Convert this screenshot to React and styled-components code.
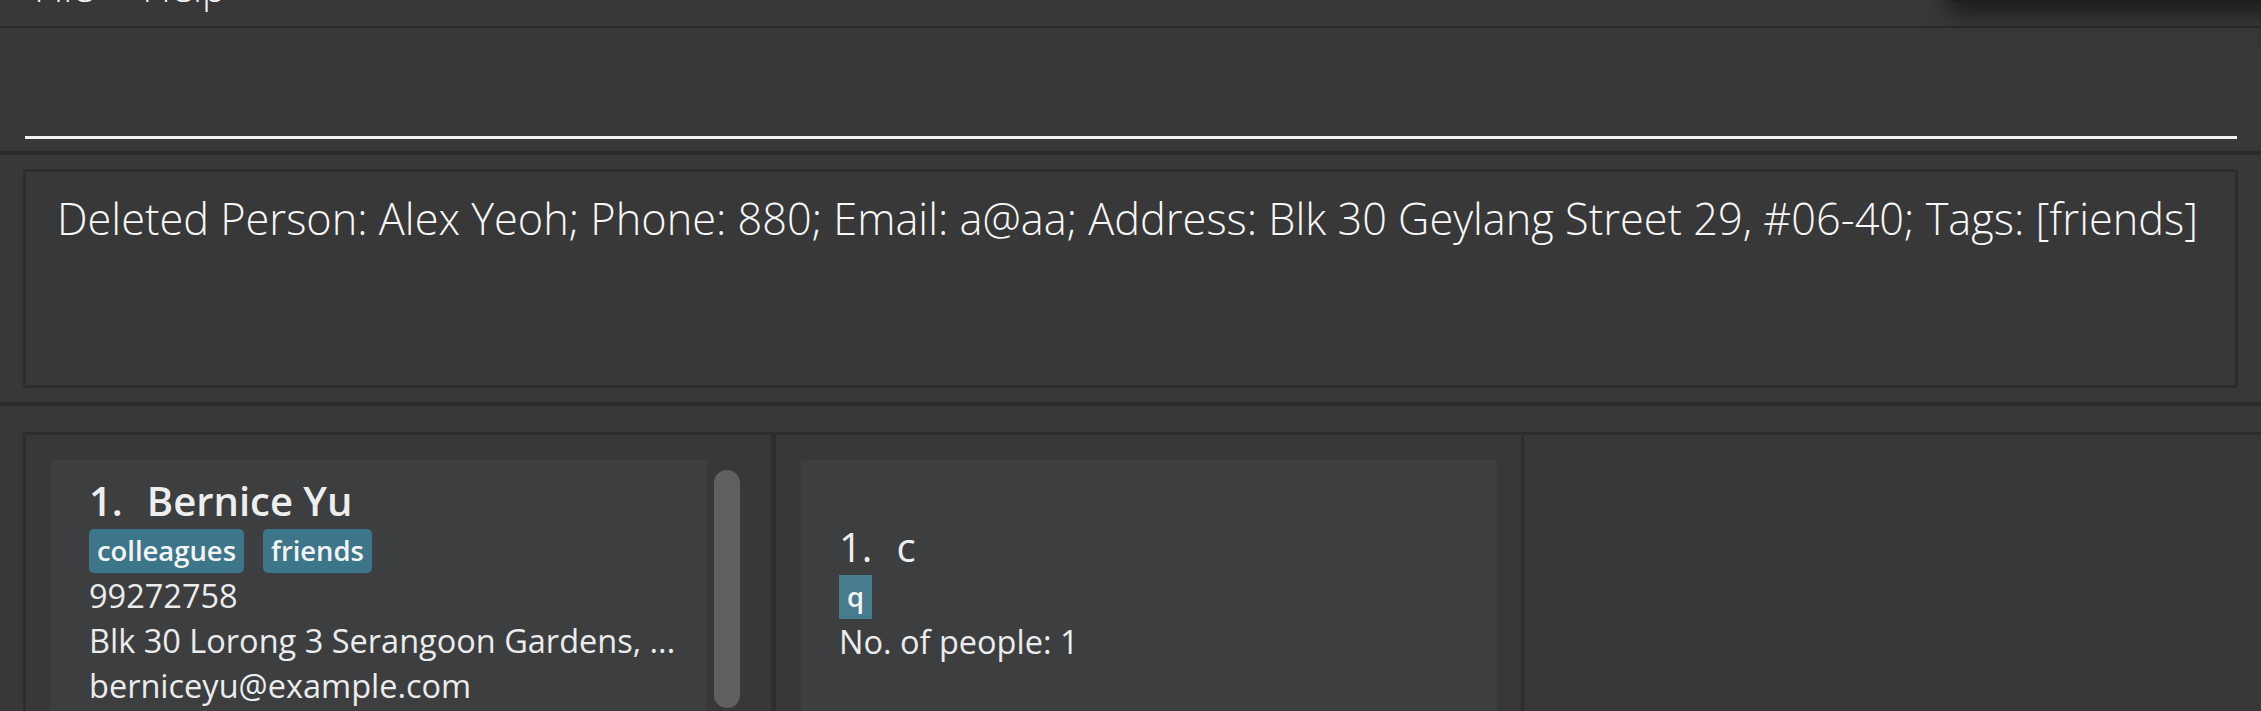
import React from "react";
import styled, { createGlobalStyle } from "styled-components";

const Global = createGlobalStyle`
  html, body {
    margin: 0;
    padding: 0;
    width: 100%;
    height: 100%;
    overflow: hidden;
    background: #383838;
  }
  #root { height: 100%; }
  *, *::before, *::after { box-sizing: border-box; }
`;

const Window = styled.div`
  position: relative;
  width: 2261px;
  height: 711px;
  display: flex;
  flex-direction: column;
  background: #383838;
  font-family: "Open Sans", "Noto Sans", sans-serif;
  color: #f0f0f0;
  overflow: hidden;
`;

const MenuBar = styled.div`
  flex: 0 0 28px;
  display: flex;
  align-items: flex-start;
  gap: 48px;
  padding-left: 34px;
  border-bottom: 2px solid #2b2b2b;
  overflow: hidden;
`;

const MenuItem = styled.span`
  margin-top: -40px;
  height: 54px;
  font-size: 40px;
  line-height: 54px;
  font-weight: 300;
  color: #f2f2f2;
`;

const WindowShadow = styled.div`
  position: absolute;
  top: -60px;
  left: 1952px;
  width: 420px;
  height: 62px;
  background: #1e1e1e;
  box-shadow: 0 6px 22px 6px rgba(0, 0, 0, 0.5);
`;

const CommandPane = styled.div`
  flex: 0 0 127px;
  padding: 0 24px 12px 25px;
  border-bottom: 4px solid #2b2b2b;
`;

const CommandField = styled.div`
  height: 100%;
  border-bottom: 3px solid #f2f2f2;
`;

const ResultPane = styled.div`
  flex: 0 0 251px;
  padding: 14px 23px;
  border-bottom: 4px solid #2b2b2b;
`;

const ResultBox = styled.div`
  height: 219px;
  border: 3px solid #2d2d2d;
  padding: 17px 28px 15px 31px;
  font-size: 43.3px;
  font-weight: 300;
  color: #f7f7f7;
  white-space: nowrap;
  overflow: hidden;
`;

const BottomArea = styled.div`
  flex: 1;
  min-height: 0;
  display: flex;
  padding: 26px 0 0 23px;
  overflow: hidden;
`;

const Panel = styled.div`
  flex: ${(p) => (p.$grow ? "1 1 auto" : `0 0 ${p.$width}px`)};
  display: flex;
  gap: 7px;
  padding: 25px ${(p) => p.$padRight}px 0 25px;
  border-top: 3px solid #2d2d2d;
  border-left: 3px solid #2d2d2d;
  border-right: ${(p) => p.$rightBorder}px solid #2d2d2d;
  overflow: hidden;
`;

const Card = styled.div`
  flex: 1;
  height: 320px;
  background: #3c3e40;
  padding: ${(p) => p.$top}px 20px 0 38px;
`;

const NameRow = styled.div`
  display: flex;
  gap: 24px;
  font-size: 40px;
  font-weight: ${(p) => p.$weight};
  line-height: 57px;
  color: #eeeeee;
  white-space: nowrap;
`;

const TagRow = styled.div`
  display: flex;
  gap: 19px;
  height: 44px;
`;

const Tag = styled.span`
  padding: 0 8px;
  height: 44px;
  line-height: 44px;
  font-size: 27.4px;
  font-weight: 600;
  color: #f4f4f4;
  background: ${(p) => p.$bg};
  border-radius: ${(p) => p.$radius}px;
`;

const InfoLine = styled.div`
  font-size: 32.5px;
  line-height: 45px;
  color: #ececec;
  white-space: nowrap;
`;

const ScrollTrack = styled.div`
  flex: 0 0 26px;
  padding-top: 10px;
`;

const ScrollThumb = styled.div`
  height: 238px;
  border-radius: 13px;
  background: #606060;
`;

export default function App() {
  return (
    <>
      <Global />
      <Window>
        <MenuBar>
          <MenuItem>File</MenuItem>
          <MenuItem>Help</MenuItem>
        </MenuBar>
        <WindowShadow />
        <CommandPane>
          <CommandField />
        </CommandPane>
        <ResultPane>
          <ResultBox>
            Deleted Person: Alex Yeoh; Phone: 880; Email: a@aa; Address: Blk 30 Geylang Street 29, #06-40; Tags: [friends]
          </ResultBox>
        </ResultPane>
        <BottomArea>
          <Panel $width={750} $padRight={31} $rightBorder={2}>
            <Card $top={12}>
              <NameRow $weight={600}>
                <span>1.</span>
                <span>Bernice Yu</span>
              </NameRow>
              <TagRow>
                <Tag $bg="#3d768a" $radius={5}>colleagues</Tag>
                <Tag $bg="#3d768a" $radius={5}>friends</Tag>
              </TagRow>
              <InfoLine>99272758</InfoLine>
              <InfoLine>Blk 30 Lorong 3 Serangoon Gardens, ...</InfoLine>
              <InfoLine>berniceyu@example.com</InfoLine>
            </Card>
            <ScrollTrack>
              <ScrollThumb />
            </ScrollTrack>
          </Panel>
          <Panel $width={748} $padRight={24} $rightBorder={0}>
            <Card $top={58}>
              <NameRow $weight={500}>
                <span>1.</span>
                <span>c</span>
              </NameRow>
              <TagRow>
                <Tag $bg="#477c8f" $radius={0}>q</Tag>
              </TagRow>
              <InfoLine>No. of people: 1</InfoLine>
            </Card>
          </Panel>
          <Panel $grow $padRight={0} $rightBorder={0} />
        </BottomArea>
      </Window>
    </>
  );
}
